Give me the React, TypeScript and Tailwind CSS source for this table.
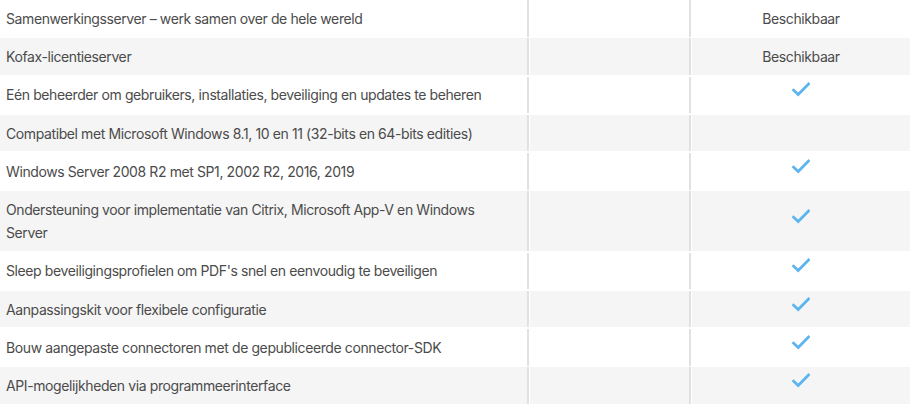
import React from "react";

type Row = { label: string; value: "check" | "text" | "none"; tall?: boolean };

const rows: Row[] = [
  { label: "Samenwerkingsserver – werk samen over de hele wereld", value: "text" },
  { label: "Kofax-licentieserver", value: "text" },
  { label: "Eén beheerder om gebruikers, installaties, beveiliging en updates te beheren", value: "check" },
  { label: "Compatibel met Microsoft Windows 8.1, 10 en 11 (32-bits en 64-bits edities)", value: "none" },
  { label: "Windows Server 2008 R2 met SP1, 2002 R2, 2016, 2019", value: "check" },
  { label: "Ondersteuning voor implementatie van Citrix, Microsoft App-V en Windows Server", value: "check", tall: true },
  { label: "Sleep beveiligingsprofielen om PDF's snel en eenvoudig te beveiligen", value: "check" },
  { label: "Aanpassingskit voor flexibele configuratie", value: "check" },
  { label: "Bouw aangepaste connectoren met de gepubliceerde connector-SDK", value: "check" },
  { label: "API-mogelijkheden via programmeerinterface", value: "check" },
];

function Check() {
  return (
    <svg width="18" height="15" viewBox="0 0 18 15" className="relative -top-[5px]">
      <path d="M1.6 8.2 L6.2 12.6 L16.6 2" fill="none" stroke="#5cb5f0" strokeWidth="2.8" strokeLinecap="square" strokeLinejoin="miter" />
    </svg>
  );
}

export default function App() {
  return (
    <div
      className="w-[910px] h-[406px] overflow-hidden bg-white flex flex-col gap-[1.75px] text-[14px] leading-[23px] tracking-[-0.4px] text-[#4b4b4b]"
      style={{ fontFamily: "Inter, 'Noto Sans', sans-serif" }}
    >
      {rows.map((r, i) => {
        const bg = i % 2 === 0 ? "bg-white" : "bg-[#f5f5f5]";
        return (
          <div key={i} className={`flex gap-[1px] shrink-0 ${r.tall ? "h-[59.5px]" : "h-[36.5px]"}`}>
            <div className={`w-[529px] shrink-0 border-r-2 border-[#e1e1e1] pl-[6px] pr-[30px] py-[6.75px] ${bg}`}>
              {r.label}
            </div>
            <div className={`w-[161px] shrink-0 border-r-2 border-[#e1e1e1] ${bg}`} />
            <div className={`flex-1 flex items-center justify-center ${bg}`}>
              {r.value === "text" && <span>Beschikbaar</span>}
              {r.value === "check" && <Check />}
            </div>
          </div>
        );
      })}
    </div>
  );
}
